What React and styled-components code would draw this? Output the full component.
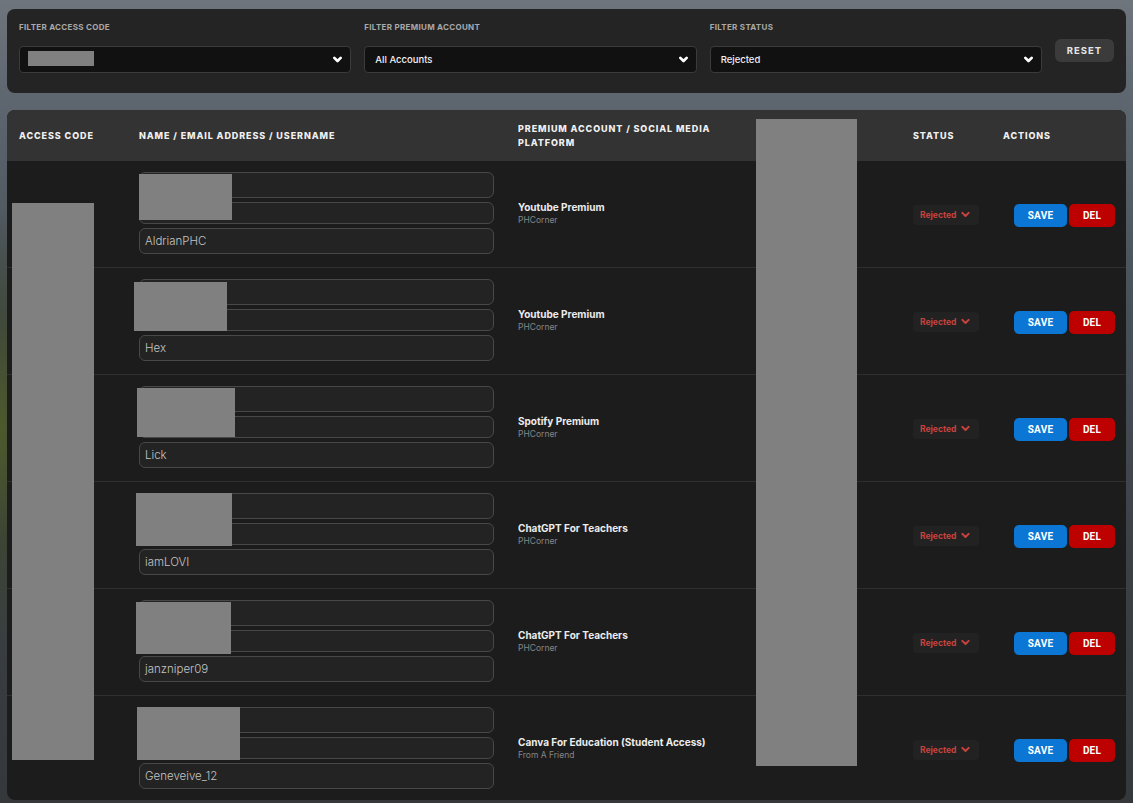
import React from "react";
import styled, { createGlobalStyle } from "styled-components";

const Global = createGlobalStyle`
  html, body { margin: 0; padding: 0; }
  body {
    width: 1133px;
    height: 803px;
    overflow: hidden;
    font-family: "Inter", "Open Sans", sans-serif;
    background:
      radial-gradient(ellipse 60px 220px at 0px 430px, #4d5a2c 0%, rgba(60,70,40,0.6) 50%, rgba(0,0,0,0) 100%),
      linear-gradient(180deg, #6f757d 0%, #5e666f 12%, #4a525a 35%, #3b4045 70%, #35383b 100%);
  }
`;

const Page = styled.div`
  padding: 9px 7px 0;
  display: flex;
  flex-direction: column;
  gap: 17px;
`;

const FilterPanel = styled.div`
  background: #242424;
  border-radius: 8px;
  padding: 12px 12px 20px;
  display: grid;
  grid-template-columns: 1fr 1fr 1fr 59px;
  column-gap: 13px;
`;

const FilterGroup = styled.div`
  display: flex;
  flex-direction: column;
`;

const FilterLabel = styled.div`
  font-size: 8px;
  font-weight: 700;
  letter-spacing: 0.3px;
  color: #a9a9a9;
  text-transform: uppercase;
  line-height: 12px;
  margin-bottom: 13px;
`;

const Select = styled.div`
  position: relative;
  height: 27px;
  box-sizing: border-box;
  background: #111111;
  border: 1px solid #3b3b3b;
  border-radius: 4px;
  display: flex;
  align-items: center;
  justify-content: space-between;
  padding: 0 8px 0 10px;
  font-size: 9.5px;
  font-weight: 500;
  color: #f2f2f2;
`;

const Chevron = ({ color = "#fff", size = 9, stroke = 3 }) => (
  <svg width={size} height={size} viewBox="0 0 10 10">
    <path d="M1.5 3.2 L5 6.7 L8.5 3.2" fill="none" stroke={color} strokeWidth={stroke} strokeLinecap="round" strokeLinejoin="round" />
  </svg>
);

const ResetButton = styled.button`
  align-self: start;
  margin-top: 18px;
  height: 23px;
  border: none;
  border-radius: 6px;
  background: #3b3b3b;
  color: #e6e6e6;
  font-family: "Inter", sans-serif;
  font-weight: 700;
  font-size: 9.5px;
  letter-spacing: 1px;
  padding: 0;
  cursor: pointer;
`;

const Redact = styled.div`
  position: absolute;
  background: #808080;
  z-index: 2;
`;

const TablePanel = styled.div`
  position: relative;
  background: #1c1c1c;
  border-radius: 8px;
  overflow: hidden;
  height: 690px;
`;

const cols = "120px 379px 250px 145px 90px 1fr";

const HeaderRow = styled.div`
  display: grid;
  grid-template-columns: ${cols};
  height: 51px;
  background: #333333;
  align-items: center;
`;

const HeadCell = styled.div`
  padding: 0 12px;
  font-size: 9px;
  font-weight: 800;
  letter-spacing: 0.9px;
  line-height: 14px;
  color: #f0f0f0;
  text-transform: uppercase;
`;

const Row = styled.div`
  position: relative;
  display: grid;
  grid-template-columns: ${cols};
  align-items: center;
  border-bottom: ${(p) => (p.$last ? "none" : "1px solid #2f2f2f")};
`;

const Cell = styled.div`
  padding: 0 12px;
`;

const NameCell = styled.div`
  position: relative;
  padding: 11px 12px 13px;
  display: flex;
  flex-direction: column;
  gap: 4px;
`;

const Field = styled.div`
  box-sizing: border-box;
  height: ${(p) => p.$h}px;
  border: 1px solid #484848;
  border-radius: 6px;
  background: #232323;
  display: flex;
  align-items: center;
  padding: 0 5px;
  font-size: 11.5px;
  font-weight: 300;
  color: #c4c4c4;
`;

const Title = styled.div`
  font-size: 10px;
  font-weight: 700;
  color: #ececec;
  line-height: 13px;
`;

const Sub = styled.div`
  font-size: 8.5px;
  color: #868686;
  line-height: 13px;
`;

const StatusPill = styled.div`
  width: 66px;
  height: 20px;
  box-sizing: border-box;
  background: #222222;
  border-radius: 4px;
  display: flex;
  align-items: center;
  gap: 5px;
  padding-left: 7px;
  margin-top: 1px;
  font-size: 8.5px;
  font-weight: 700;
  color: #c9433e;
`;

const Actions = styled.div`
  display: flex;
  gap: 2px;
  padding-left: 23px;
  margin-top: 3px;
`;

const ActionButton = styled.button`
  height: 23px;
  width: ${(p) => p.$w}px;
  border: none;
  border-radius: 5px;
  background: ${(p) => p.$bg};
  color: #fff;
  font-family: "Roboto", "Liberation Sans", sans-serif;
  font-weight: 700;
  font-size: 10px;
  letter-spacing: 0.2px;
  padding: 0;
  cursor: pointer;
`;

const rows = [
  { user: "AldrianPHC", title: "Youtube Premium", sub: "PHCorner", r: [13, 0, 93, 46] },
  { user: "Hex", title: "Youtube Premium", sub: "PHCorner", r: [14, -5, 93, 49] },
  { user: "Lick", title: "Spotify Premium", sub: "PHCorner", r: [13, -2, 98, 49] },
  { user: "iamLOVI", title: "ChatGPT For Teachers", sub: "PHCorner", r: [11, -3, 96, 53] },
  { user: "janzniper09", title: "ChatGPT For Teachers", sub: "PHCorner", r: [13, -3, 95, 52] },
  { user: "Geneveive_12", title: "Canva For Education (Student Access)", sub: "From A Friend", r: [11, -2, 103, 53] },
];

export default function App() {
  return (
    <>
      <Global />
      <Page>
        <FilterPanel>
          <FilterGroup>
            <FilterLabel>Filter Access Code</FilterLabel>
            <Select>
              <Redact style={{ left: 8, top: 4, width: 66, height: 15 }} />
              <span />
              <Chevron />
            </Select>
          </FilterGroup>
          <FilterGroup>
            <FilterLabel>Filter Premium Account</FilterLabel>
            <Select>
              <span>All Accounts</span>
              <Chevron />
            </Select>
          </FilterGroup>
          <FilterGroup>
            <FilterLabel>Filter Status</FilterLabel>
            <Select>
              <span>Rejected</span>
              <Chevron />
            </Select>
          </FilterGroup>
          <ResetButton>RESET</ResetButton>
        </FilterPanel>

        <TablePanel>
          <Redact style={{ left: 5, top: 93, width: 82, height: 557 }} />
          <Redact style={{ left: 749, top: 9, width: 101, height: 647 }} />
          <HeaderRow>
            <HeadCell>Access Code</HeadCell>
            <HeadCell>Name / Email Address / Username</HeadCell>
            <HeadCell>Premium Account / Social Media Platform</HeadCell>
            <HeadCell />
            <HeadCell>Status</HeadCell>
            <HeadCell>Actions</HeadCell>
          </HeaderRow>
          {rows.map((row, i) => (
            <Row key={i} $last={i === rows.length - 1}>
              <Cell />
              <NameCell>
                <Redact
                  style={{
                    top: row.r[0],
                    left: 12 + row.r[1],
                    width: row.r[2],
                    height: row.r[3],
                  }}
                />
                <Field $h={26} />
                <Field $h={22} />
                <Field $h={26}>{row.user}</Field>
              </NameCell>
              <Cell>
                <Title>{row.title}</Title>
                <Sub>{row.sub}</Sub>
              </Cell>
              <Cell />
              <Cell>
                <StatusPill>
                  Rejected
                  <Chevron color="#c9433e" size={9} stroke={2.2} />
                </StatusPill>
              </Cell>
              <Actions>
                <ActionButton $w={53} $bg="#0b76d3">SAVE</ActionButton>
                <ActionButton $w={46} $bg="#bd0000">DEL</ActionButton>
              </Actions>
            </Row>
          ))}
        </TablePanel>
      </Page>
    </>
  );
}
